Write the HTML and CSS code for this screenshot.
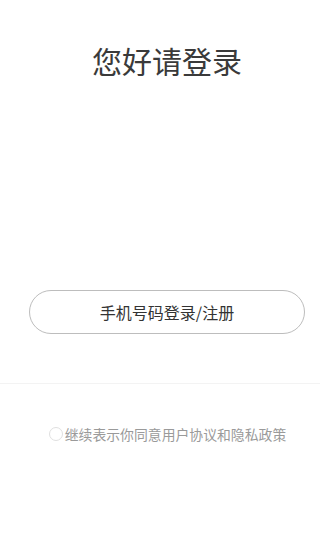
FILE: index.html
```html
<!DOCTYPE html>
<html lang="zh">
<head>
<meta charset="utf-8">
<link rel="stylesheet" href="styles.css">
</head>
<body>
<div class="top">
  <h1 class="title">您好请登录</h1>
  <button class="login-btn">手机号码登录/注册</button>
</div>
<div class="divider"></div>
<div class="agree">
  <span class="check"></span>
  <span class="agree-text">继续表示你同意用户协议和隐私政策</span>
</div>
</body>
</html>
```
FILE: styles.css
```css
html, body {
  margin: 0;
  padding: 0;
  background: #ffffff;
}
body {
  width: 320px;
  height: 534px;
  font-family: "Noto Sans CJK SC", "Noto Sans", sans-serif;
  overflow: hidden;
}
.top {
  padding-left: 14px;
  display: flex;
  flex-direction: column;
  align-items: center;
}
.title {
  margin: 45px 0 0 0;
  font-size: 30px;
  line-height: 30px;
  font-weight: 400;
  color: #3a3a3a;
}
.login-btn {
  margin-top: 215px;
  width: 276px;
  height: 44px;
  border: 1px solid #bdbdbd;
  border-radius: 22px;
  background: #ffffff;
  font-family: "Noto Sans CJK SC", "Noto Sans", sans-serif;
  font-size: 16px;
  color: #333333;
  padding: 0;
}
.divider {
  margin-top: 49px;
  height: 1px;
  background: #f3f3f3;
}
.agree {
  padding-left: 15px;
  margin-top: 40px;
  display: flex;
  justify-content: center;
  align-items: center;
  gap: 2px;
  height: 20px;
}
.check {
  width: 12px;
  height: 12px;
  border: 1px solid #e0e0e0;
  border-radius: 50%;
}
.agree-text {
  font-size: 13.85px;
  line-height: 20px;
  color: #9a9a9a;
}
```
